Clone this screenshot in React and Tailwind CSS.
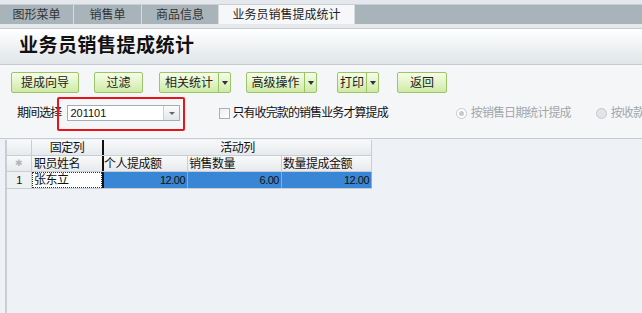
import React from 'react';

const font = { fontFamily: '"Liberation Sans", "Noto Sans CJK SC", sans-serif' };

// Green toolbar button, optionally with a dropdown part
const ToolButton = ({ label, width, dropdown }) => (
  <div
    className={`flex h-[21px] shrink-0 items-stretch whitespace-nowrap rounded-[2px] border border-[#9cc56a] bg-gradient-to-b from-[#f6fde9] to-[#cfeaa6] text-[12px] text-[#222] ${width}`}
  >
    <div className="flex flex-1 items-center justify-center">{label}</div>
    {dropdown && (
      <div className="flex w-[12px] items-center justify-center border-l border-[#9cc56a]">
        <span className="block h-0 w-0 border-x-[3px] border-t-[4px] border-x-transparent border-t-[#333]" />
      </div>
    )}
  </div>
);

const Tab = ({ label, width, active }) => (
  <div
    className={`flex h-[19px] shrink-0 items-center justify-center whitespace-nowrap border-r border-[#d6dbdf] text-[12px] ${width} ${
      active ? 'bg-[#f5f7f8] text-[#222]' : 'bg-[#a9b3ba] text-[#333]'
    }`}
  >
    {label}
  </div>
);

export default function App() {
  return (
    <div className="flex h-[313px] w-[642px] flex-col overflow-hidden bg-[#eef1f5]" style={font}>
      {/* tab strip */}
      <div className="h-[5px] border-b border-[#c9cfd4] bg-[#e4e8ec]" />
      <div className="flex bg-[#a9b3ba]">
        <Tab label="图形菜单" width="w-[74px]" />
        <Tab label="销售单" width="w-[68px]" />
        <Tab label="商品信息" width="w-[77px]" />
        <Tab label="业务员销售提成统计" width="w-[136px]" active />
      </div>
      <div className="h-[4px] bg-[#e6e9ec]" />

      {/* title header */}
      <div className="flex h-[37px] items-center border-y border-[#c5cbd0] bg-gradient-to-b from-[#ffffff] to-[#dfe5e8] pl-[19px]">
        <h1 className="whitespace-nowrap text-[19px] font-bold tracking-[0.5px] text-[#111]">业务员销售提成统计</h1>
      </div>

      {/* toolbar & filters */}
      <div className="flex flex-col bg-[#f5f6f8] pb-[5px]">
        <div className="flex items-center pl-[11px] pt-[7px]">
          <ToolButton label="提成向导" width="w-[68px]" />
          <div className="w-[15px] shrink-0" />
          <ToolButton label="过滤" width="w-[49px]" />
          <div className="w-[16px] shrink-0" />
          <ToolButton label="相关统计" width="w-[72px]" dropdown />
          <div className="w-[15px] shrink-0" />
          <ToolButton label="高级操作" width="w-[71px]" dropdown />
          <div className="w-[20px] shrink-0" />
          <ToolButton label="打印" width="w-[42px]" dropdown />
          <div className="w-[18px] shrink-0" />
          <ToolButton label="返回" width="w-[50px]" />
        </div>

        <div className="flex h-[40px] items-center whitespace-nowrap pl-[17px] text-[12px] tracking-[-0.9px] text-[#111]">
          <span className="shrink-0">期间选择</span>
          <div className="relative ml-[6px] shrink-0 tracking-normal">
            <div className="flex h-[16px] w-[113px] items-center border border-[#a6aeb5] bg-white">
              <span className="flex-1 pl-[2px] text-[11px]">201101</span>
              <div className="flex h-full w-[16px] items-center justify-center border-l border-[#c8ced3] bg-gradient-to-b from-[#fafbfc] to-[#e3e7ea]">
                <span className="block h-0 w-0 border-x-[3px] border-t-[3px] border-x-transparent border-t-[#666]" />
              </div>
            </div>
            <div className="pointer-events-none absolute left-[-10px] top-[-8px] h-[34px] w-[128px] rounded-[2px] border-2 border-[#e8141a]" />
          </div>

          <div className="ml-[39px] flex shrink-0 items-center">
            <span className="mr-[2px] block h-[11px] w-[11px] border border-[#a9b0b6] bg-gradient-to-br from-[#eceff1] to-[#ffffff]" />
            <span>只有收完款的销售业务才算提成</span>
          </div>

          <div className="ml-[68px] flex shrink-0 items-center text-[#a2a7ab]">
            <span className="mr-[4px] flex h-[11px] w-[11px] items-center justify-center rounded-full border border-[#c4c9cd] bg-white">
              <span className="block h-[5px] w-[5px] rounded-full bg-[#c7cbce]" />
            </span>
            <span>按销售日期统计提成</span>
          </div>

          <div className="ml-[25px] flex shrink-0 items-center text-[#a2a7ab]">
            <span className="mr-[4px] block h-[11px] w-[11px] rounded-full border border-[#c4c9cd] bg-[#e2e5e7]" />
            <span>按收款日期统计提成</span>
          </div>
        </div>
      </div>

      {/* grid */}
      <div className="flex flex-1 border-t border-[#c6ccd1] pt-[1px]">
        <div className="ml-[5px] w-[2px] border-x border-[#c9ced2] bg-[#f7f8f9]" />
        <div className="flex flex-col whitespace-nowrap text-[12px] tracking-[-0.5px] text-[#111]">
          <div className="flex h-[16px] border-b border-[#c9ced3] bg-gradient-to-b from-[#f8f9fa] to-[#e7eaed]">
            <div className="w-[25px] border-r border-[#c9ced3]" />
            <div className="flex w-[70px] items-center justify-center">固定列</div>
            <div className="w-[2px] bg-[#111]" />
            <div className="flex w-[268px] items-center justify-center border-r border-[#c9ced3]">活动列</div>
          </div>
          <div className="flex h-[16px] border-b border-[#c9ced3] bg-gradient-to-b from-[#f8f9fa] to-[#e7eaed]">
            <div className="flex w-[25px] items-center justify-center border-r border-[#c9ced3] text-[9px] text-[#b0b6ba]">✱</div>
            <div className="flex w-[70px] items-center pl-[2px]">职员姓名</div>
            <div className="w-[2px] bg-[#111]" />
            <div className="flex w-[84px] items-center border-r border-[#c9ced3]">个人提成额</div>
            <div className="flex w-[94px] items-center border-r border-[#c9ced3] pl-[1px]">销售数量</div>
            <div className="flex w-[90px] items-center border-r border-[#c9ced3] pl-[1px]">数量提成金额</div>
          </div>
          <div className="flex h-[17px] border-b border-[#c9ced3] bg-white">
            <div className="flex w-[25px] items-center justify-center border-r border-[#c9ced3] bg-[#eef0f2] text-[11px]">1</div>
            <div className="flex w-[70px] items-center border border-dotted border-[#333] pl-[1px]">张东立</div>
            <div className="w-[2px] bg-[#111]" />
            <div className="flex w-[84px] items-center justify-end border-r border-[#7fb0e0] bg-[#3a86d6] pr-[2px] text-[11px] text-[#111]">12.00</div>
            <div className="flex w-[94px] items-center justify-end border-r border-[#7fb0e0] bg-[#3a86d6] pr-[2px] text-[11px] text-[#111]">6.00</div>
            <div className="flex w-[90px] items-center justify-end border-r border-[#7fb0e0] bg-[#3a86d6] pr-[2px] text-[11px] text-[#111]">12.00</div>
          </div>
        </div>
      </div>
    </div>
  );
}
